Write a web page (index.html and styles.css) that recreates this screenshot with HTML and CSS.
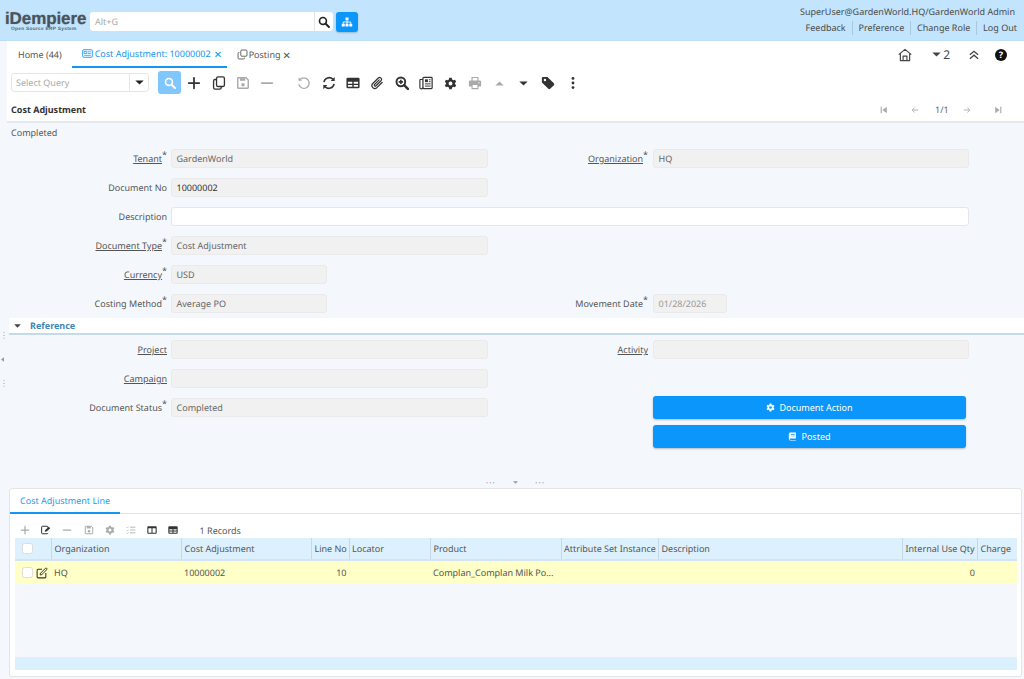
FILE: index.html
```html
<!DOCTYPE html>
<html lang="en">
<head>
<meta charset="utf-8">
<title>iDempiere</title>
<link rel="stylesheet" href="styles.css">
</head>
<body>
<svg class="sprite" xmlns="http://www.w3.org/2000/svg">
  <symbol id="search" viewBox="0 0 16 16"><circle cx="6.6" cy="6.6" r="4.6" fill="none" stroke="currentColor" stroke-width="2.2"/><path d="M10 10l4.6 4.6" stroke="currentColor" stroke-width="2.6" stroke-linecap="round"/></symbol>
  <symbol id="tree" viewBox="0 0 16 16"><path d="M6 2h4v3.6H6zM1 10.4h4V14H1zM6 10.4h4V14H6zM11 10.4h4V14h-4z" fill="currentColor"/><path d="M8 5.6v5M3 10.4V8h10v2.4" fill="none" stroke="currentColor" stroke-width="1.2"/></symbol>
  <symbol id="caret" viewBox="0 0 10 6"><path d="M0 .5h10L5 5.5z" fill="currentColor"/></symbol>
  <symbol id="caretup" viewBox="0 0 10 6"><path d="M0 5.5h10L5 .5z" fill="currentColor"/></symbol>
  <symbol id="news" viewBox="0 0 16 16"><rect x="1" y="2.5" width="14" height="11" rx="1.5" fill="none" stroke="currentColor" stroke-width="1.3"/><path d="M3.2 5h3.6v3H3.2zM8.2 5.5h4.6M8.2 8h4.6M3.2 10.7h9.6" fill="none" stroke="currentColor" stroke-width="1.1"/></symbol>
  <symbol id="windows" viewBox="0 0 16 16"><rect x="5.5" y="1.5" width="9" height="9" rx="1.5" fill="none" stroke="currentColor" stroke-width="1.3"/><path d="M3.5 5H3a1.500 1.500 0 0 0-1.500 1.500V13A1.500 1.500 0 0 0 3 14.500h6.500A1.500 1.500 0 0 0 11 13v-.5" fill="none" stroke="currentColor" stroke-width="1.300"/></symbol>
  <symbol id="plus" viewBox="0 0 16 16"><path d="M8 2v12M2 8h12" stroke="currentColor" stroke-width="2" stroke-linecap="round"/></symbol>
  <symbol id="minus" viewBox="0 0 16 16"><path d="M2 8h12" stroke="currentColor" stroke-width="2" stroke-linecap="round"/></symbol>
  <symbol id="copy" viewBox="0 0 16 16"><rect x="5.200" y="1" width="9" height="11" rx="1.800" fill="none" stroke="currentColor" stroke-width="1.500"/><path d="M5 4H3.500A1.700 1.700 0 0 0 1.800 5.700v7.600A1.700 1.700 0 0 0 3.500 15h5.300a1.700 1.700 0 0 0 1.700-1.700V12" fill="none" stroke="currentColor" stroke-width="1.500"/></symbol>
  <symbol id="save" viewBox="0 0 16 16"><path d="M2.500 2h9l2.500 2.500v9a.5.5 0 0 1-.5.5h-11a.5.5 0 0 1-.5-.5v-11a.5.5 0 0 1 .5-.5z" fill="none" stroke="currentColor" stroke-width="1.600"/><path d="M4.500 2.500h6v3h-6z" fill="currentColor"/><circle cx="8" cy="10" r="2" fill="currentColor"/></symbol>
  <symbol id="undo" viewBox="0 0 16 16"><path d="M3.300 4.300A6 6 0 1 1 2.200 10" fill="none" stroke="currentColor" stroke-width="1.500" stroke-linecap="round"/><path d="M1.800 1.500v4h4z" fill="currentColor"/></symbol>
  <symbol id="refresh" viewBox="0 0 16 16"><path d="M2.200 7A6 6 0 0 1 12.500 3.800M13.800 9A6 6 0 0 1 3.500 12.200" fill="none" stroke="currentColor" stroke-width="1.800"/><path d="M14.500 1v4.700H9.800zM1.500 15v-4.700h4.700z" fill="currentColor"/></symbol>
  <symbol id="table" viewBox="0 0 16 16"><path fill-rule="evenodd" d="M2 2h12a1.500 1.500 0 0 1 1.500 1.500v9A1.500 1.500 0 0 1 14 14H2A1.500 1.500 0 0 1 .5 12.500v-9A1.500 1.500 0 0 1 2 2zm.200 4.700v2.200h5V6.700zm6.600 0v2.200h5V6.700zm-6.600 3.600v2.100h5v-2.100zm6.600 0v2.100h5v-2.100z" fill="currentColor"/></symbol>
  <symbol id="columns" viewBox="0 0 16 16"><path fill-rule="evenodd" d="M2 2h12a1.500 1.500 0 0 1 1.500 1.500v9A1.500 1.500 0 0 1 14 14H2A1.500 1.500 0 0 1 .5 12.500v-9A1.500 1.500 0 0 1 2 2zm.200 3v7.400h5V5zm6.600 0v7.400h5V5z" fill="currentColor"/></symbol>
  <symbol id="clip" viewBox="0 0 16 16"><path d="M13.800 7.400l-5.900 5.900a3.300 3.300 0 0 1-4.700-4.700l6.300-6.300a2.200 2.200 0 0 1 3.100 3.100l-6 6a1.100 1.100 0 0 1-1.500-1.500l5.400-5.400" fill="none" stroke="currentColor" stroke-width="1.400" stroke-linecap="round"/></symbol>
  <symbol id="zoomin" viewBox="0 0 16 16"><circle cx="6.700" cy="6.700" r="5" fill="none" stroke="currentColor" stroke-width="2.200"/><path d="M10.500 10.500l4.200 4.200" stroke="currentColor" stroke-width="2.800" stroke-linecap="round"/><path d="M6.700 4.200v5M4.200 6.700h5" stroke="currentColor" stroke-width="1.800"/></symbol>
  <symbol id="paper" viewBox="0 0 16 16"><rect x="4.500" y="1.500" width="10.500" height="13" rx="1" fill="none" stroke="currentColor" stroke-width="1.400"/><path d="M4.500 4H1.500A.7.7 0 0 0 1 4.500v8.500a1.700 1.700 0 0 0 3.500 0" fill="none" stroke="currentColor" stroke-width="1.300"/><path d="M6.800 3.800h3.400v3.200H6.800z" fill="currentColor"/><path d="M11.300 4.300h2M11.300 6.500h2M6.800 9h6.500M6.800 11.500h6.500" stroke="currentColor" stroke-width="1.100"/></symbol>
  <symbol id="gear" viewBox="0 0 16 16"><path fill-rule="evenodd" d="M6.500 1h3l.5 2 1.500.9 2-.6 1.500 2.600-1.500 1.400v1.400l1.500 1.400-1.500 2.600-2-.6-1.500.9-.5 2h-3l-.5-2-1.500-.9-2 .6L1 10.100l1.500-1.400V7.300L1 5.900l1.500-2.600 2 .6L6 3zM8 5.600a2.400 2.400 0 1 0 0 4.800 2.400 2.400 0 0 0 0-4.800z" fill="currentColor"/></symbol>
  <symbol id="print" viewBox="0 0 16 16"><path fill-rule="evenodd" d="M4 1h8v4h1.500A1.500 1.500 0 0 1 15 6.500V11a1 1 0 0 1-1 1h-2v3H4v-3H2a1 1 0 0 1-1-1V6.500A1.500 1.500 0 0 1 2.500 5H4zm1.300 1.300V5h5.400V2.300zm0 8V13.700h5.400v-3.400zM12.500 7a.8.8 0 1 0 0 1.600.8.8 0 0 0 0-1.600z" fill="currentColor"/></symbol>
  <symbol id="tag" viewBox="0 0 16 16"><path fill-rule="evenodd" d="M1 2.200A1.200 1.200 0 0 1 2.200 1h5.100l7.400 7.400a1.500 1.500 0 0 1 0 2.100l-4.200 4.200a1.500 1.500 0 0 1-2.100 0L1 7.300zM4.500 3.100a1.400 1.400 0 1 0 0 2.800 1.400 1.400 0 0 0 0-2.800z" fill="currentColor"/></symbol>
  <symbol id="dots" viewBox="0 0 16 16"><circle cx="8" cy="2.800" r="1.600" fill="currentColor"/><circle cx="8" cy="8" r="1.600" fill="currentColor"/><circle cx="8" cy="13.200" r="1.600" fill="currentColor"/></symbol>
  <symbol id="home" viewBox="0 0 16 16"><path d="M.8 7.500L8 1.500l7.200 6M2.700 6.500V14.500h10.600V6.500M5.800 14.500V9.300h4.400v5.200" fill="none" stroke="currentColor" stroke-width="1.300" stroke-linejoin="round"/></symbol>
  <symbol id="chevup" viewBox="0 0 16 16"><path d="M2.500 7.800L8 3l5.500 4.800M2.500 13L8 8.200l5.500 4.800" fill="none" stroke="currentColor" stroke-width="1.700"/></symbol>
  <symbol id="first" viewBox="0 0 10 10"><path d="M1.500 1v8" stroke="currentColor" stroke-width="1.400"/><path d="M8.500 1v8L3 5z" fill="currentColor"/></symbol>
  <symbol id="last" viewBox="0 0 10 10"><path d="M8.500 1v8" stroke="currentColor" stroke-width="1.400"/><path d="M1.500 1v8L7 5z" fill="currentColor"/></symbol>
  <symbol id="left" viewBox="0 0 10 10"><path d="M9 5H1.500M4.500 2L1.500 5l3 3" fill="none" stroke="currentColor" stroke-width="1.100"/></symbol>
  <symbol id="right" viewBox="0 0 10 10"><path d="M1 5h7.500M5.500 2l3 3-3 3" fill="none" stroke="currentColor" stroke-width="1.100"/></symbol>
  <symbol id="book" viewBox="0 0 16 16"><path fill-rule="evenodd" d="M4 1h10v10.500H4.200a1.200 1.200 0 0 0 0 2.500H14v1H4a2.500 2.500 0 0 1-2.500-2.500v-9A2.500 2.500 0 0 1 4 1zm1.500 3v1.200h6.500V4zm0 2.500v1.200h6.500V6.500z" fill="currentColor"/></symbol>
  <symbol id="edit" viewBox="0 0 16 16"><path d="M8 3H2.800A1.300 1.300 0 0 0 1.500 4.300v9A1.300 1.300 0 0 0 2.800 14.500h9a1.300 1.300 0 0 0 1.300-1.300V8" fill="none" stroke="currentColor" stroke-width="1.400"/><path d="M6 8.300l6.700-6.700a1 1 0 0 1 1.400 0l.4.400a1 1 0 0 1 0 1.400L7.800 10.100l-2.300.5z" fill="none" stroke="currentColor" stroke-width="1.300"/></symbol>
  <symbol id="editrec" viewBox="0 0 16 16"><path d="M11 4.500V3.300A1.300 1.300 0 0 0 9.700 2H2.300A1.300 1.300 0 0 0 1 3.300v9.400A1.300 1.300 0 0 0 2.300 14h7.400a1.300 1.300 0 0 0 1.300-1.300" fill="none" stroke="currentColor" stroke-width="1.600"/><path d="M6 10.800l.7-2.800 5.700-5.300 2.400 2.400-5.800 5.200z" fill="currentColor"/></symbol>
  <symbol id="checklist" viewBox="0 0 16 16"><path d="M6.500 3.500H15M6.500 8H15M6.500 12.500H15" stroke="currentColor" stroke-width="1.300"/><path d="M1 3.500l1.200 1.200L4 2.500M1 8l1.200 1.200L4 7M1 12.500l1.200 1.200L4 11.500" fill="none" stroke="currentColor" stroke-width="1"/></symbol>
</svg>

<header class="top">
  <div class="brand">
    <div class="logo">
      <div class="logo-main">iDempiere</div>
      <div class="logo-sub">Open Source ERP System</div>
    </div>
    <div class="global-search">
      <span class="gs-input">Alt+G</span>
      <span class="gs-btn"><svg class="i14"><use href="#search"/></svg></span>
    </div>
    <span class="tree-btn"><svg class="i12"><use href="#tree"/></svg></span>
  </div>
  <div class="user">
    <div class="user-name">SuperUser@GardenWorld.HQ/GardenWorld Admin</div>
    <div class="user-links">
      <span class="ulink">Feedback</span><span class="ulink">Preference</span><span class="ulink">Change Role</span><span class="ulink">Log Out</span>
    </div>
  </div>
</header>

<div class="shell">
  <div class="rail">
    <span class="rail-dots">⋮</span>
    <svg class="rail-arrow" viewBox="0 0 4 6"><path d="M4 0v6L0 3z" fill="currentColor"/></svg>
    <span class="rail-dots">⋮</span>
  </div>
  <div class="content">
    <nav class="tabs">
      <div class="tab tab-home">Home (44)</div>
      <div class="tab tab-active"><svg class="i11"><use href="#news"/></svg>Cost Adjustment: 10000002<span class="x">✕</span></div>
      <div class="tab tab-post"><svg class="i11"><use href="#windows"/></svg>Posting<span class="x">✕</span></div>
      <div class="tab-tools">
        <svg class="tt-home"><use href="#home"/></svg>
        <span class="tt-count"><svg class="tt-caret"><use href="#caret"/></svg>2</span>
        <svg class="tt-chev"><use href="#chevup"/></svg>
        <span class="tt-help">?</span>
      </div>
    </nav>

    <div class="toolbar">
      <div class="query"><span class="query-text">Select Query</span><span class="query-btn"><svg class="c9"><use href="#caret"/></svg></span></div>
      <span class="qsearch"><svg class="i12"><use href="#search"/></svg></span>
      <div class="tools">
        <span class="tb"><svg><use href="#plus"/></svg></span>
        <span class="tb"><svg><use href="#copy"/></svg></span>
        <span class="tb off"><svg><use href="#save"/></svg></span>
        <span class="tb off"><svg><use href="#minus"/></svg></span>
        <span class="tb-gap"></span>
        <span class="tb off"><svg><use href="#undo"/></svg></span>
        <span class="tb"><svg><use href="#refresh"/></svg></span>
        <span class="tb"><svg><use href="#table"/></svg></span>
        <span class="tb"><svg><use href="#clip"/></svg></span>
        <span class="tb"><svg><use href="#zoomin"/></svg></span>
        <span class="tb"><svg><use href="#paper"/></svg></span>
        <span class="tb"><svg class="s14"><use href="#gear"/></svg></span>
        <span class="tb off"><svg><use href="#print"/></svg></span>
        <span class="tb off"><svg class="c9"><use href="#caretup"/></svg></span>
        <span class="tb"><svg class="c9"><use href="#caret"/></svg></span>
        <span class="tb"><svg><use href="#tag"/></svg></span>
        <span class="tb"><svg><use href="#dots"/></svg></span>
      </div>
    </div>

    <div class="titlebar">
      <span class="title">Cost Adjustment</span>
      <div class="pager">
        <svg class="pg pg1"><use href="#first"/></svg>
        <svg class="pg pg2"><use href="#left"/></svg>
        <span class="pg-text">1/1</span>
        <svg class="pg pg3"><use href="#right"/></svg>
        <svg class="pg pg4"><use href="#last"/></svg>
      </div>
    </div>

    <div class="status">Completed</div>

    <form class="form">
      <label class="lbl"><u>Tenant</u><sup>*</sup></label><div class="fld">GardenWorld</div>
      <label class="lbl lbl2"><u>Organization</u><sup>*</sup></label><div class="fld">HQ</div>

      <label class="lbl">Document No</label><div class="fld dark">10000002</div><div class="rest"></div>

      <label class="lbl">Description</label><div class="fld white span3"></div>

      <label class="lbl"><u>Document Type</u><sup>*</sup></label><div class="fld">Cost Adjustment</div><div class="rest"></div>

      <label class="lbl"><u>Currency</u><sup>*</sup></label><div class="fld short">USD</div><div class="rest"></div>

      <label class="lbl">Costing Method<sup>*</sup></label><div class="fld short">Average PO</div>
      <label class="lbl lbl2">Movement Date<sup>*</sup></label><div class="fld date">01/28/2026</div>
    </form>

    <div class="group"><svg class="c8"><use href="#caret"/></svg><span>Reference</span></div>

    <div class="form form-ref">
      <label class="lbl"><u>Project</u></label><div class="fld"></div>
      <label class="lbl lbl2"><u>Activity</u></label><div class="fld"></div>

      <label class="lbl"><u>Campaign</u></label><div class="fld"></div><div class="rest"></div>

      <label class="lbl">Document Status<sup>*</sup></label><div class="fld">Completed</div>
      <div class="lbl2"></div><button class="act" type="button"><svg class="i9"><use href="#gear"/></svg>Document Action</button>

      <div class="btn-skip"></div><button class="act" type="button"><svg class="i9"><use href="#book"/></svg>Posted</button>
    </div>

    <div class="splitter"><span>···</span><svg class="c5"><use href="#caret"/></svg><span>···</span></div>

    <section class="detail">
      <div class="d-tabs"><div class="d-tab">Cost Adjustment Line</div></div>
      <div class="d-tools">
        <span class="dt off"><svg><use href="#plus"/></svg></span>
        <span class="dt"><svg><use href="#editrec"/></svg></span>
        <span class="dt off"><svg><use href="#minus"/></svg></span>
        <span class="dt off"><svg><use href="#save"/></svg></span>
        <span class="dt off"><svg><use href="#gear"/></svg></span>
        <span class="dt off"><svg><use href="#checklist"/></svg></span>
        <span class="dt"><svg><use href="#columns"/></svg></span>
        <span class="dt"><svg><use href="#table"/></svg></span>
        <span class="records">1 Records</span>
      </div>
      <div class="grid">
        <div class="g-row g-head">
          <div class="gc gc-check"><span class="cb"></span></div>
          <div class="gc">Organization</div>
          <div class="gc">Cost Adjustment</div>
          <div class="gc">Line No</div>
          <div class="gc">Locator</div>
          <div class="gc">Product</div>
          <div class="gc">Attribute Set Instance</div>
          <div class="gc">Description</div>
          <div class="gc">Internal Use Qty</div>
          <div class="gc gc-last">Charge</div>
        </div>
        <div class="g-row g-data">
          <div class="gc gc-check"><span class="cb"></span><svg class="edit"><use href="#edit"/></svg></div>
          <div class="gc">HQ</div>
          <div class="gc">10000002</div>
          <div class="gc num">10</div>
          <div class="gc"></div>
          <div class="gc">Complan_Complan Milk Po...</div>
          <div class="gc"></div>
          <div class="gc"></div>
          <div class="gc num">0</div>
          <div class="gc"></div>
        </div>
        <div class="g-body"></div>
        <div class="g-foot"></div>
      </div>
    </section>
  </div>
</div>
</body>
</html>
```

FILE: styles.css
```css
* { box-sizing: border-box; }
html, body { margin: 0; padding: 0; height: 679px; overflow: hidden; }
body { font-family: "Noto Sans", sans-serif; font-size: 9px; color: #444; background: #f4f8fd; text-rendering: geometricPrecision; }
.sprite { display: none; }
svg { display: block; }

.top { height: 41px; background: #c2e4fc; border-bottom: 1px solid #bcdff7; display: flex; justify-content: space-between; padding: 0 9px 0 5px; }
.brand { display: flex; align-items: flex-start; }
.logo { width: 85px; padding-top: 10px; }
.logo-main { font-family: "Liberation Sans", sans-serif; font-weight: 700; font-size: 17px; line-height: 17px; color: #4a545e; letter-spacing: -.1px; text-shadow: 0 0 1px rgba(60,70,80,.5); }
.logo-sub { font-family: "Liberation Sans", sans-serif; font-weight: 700; font-size: 4.800px; line-height: 5px; color: #5a646e; padding-left: 6px; letter-spacing: .28px; white-space: nowrap; }
.global-search { margin: 12px 0 0 0; width: 243px; height: 19px; background: #fff; border-radius: 3px; display: flex; justify-content: space-between; }
.gs-input { color: #aaa; padding-left: 5px; line-height: 19px; }
.gs-btn { width: 19px; border-left: 1px solid #e4e4e4; color: #222; display: flex; align-items: center; justify-content: center; }
.i14 { width: 12px; height: 12px; }
.i12 { width: 12px; height: 12px; }
.tree-btn { margin: 12px 0 0 3px; width: 22px; height: 20px; border-radius: 3px; background: #0a96fa; color: #fff; display: flex; align-items: center; justify-content: center; box-shadow: 0 1px 2px rgba(0,0,0,.2); }
.user { text-align: right; color: #4a4a4a; padding-top: 4px; }
.user-name { line-height: 16px; }
.user-links { display: flex; justify-content: flex-end; line-height: 14px; margin: 1px -2px 0 0; }
.ulink { padding: 0 5.900px; border-left: 1px solid #a9c8de; }
.ulink:first-child { border-left: 0; }
.ulink:last-child { padding-right: 0; }

.shell { display: flex; height: 638px; }
.rail { width: 7px; flex: none; display: flex; flex-direction: column; align-items: flex-start; padding-top: 289px; color: #999; }
.rail-dots { font-size: 8px; line-height: 12px; width: 6px; text-align: center; }
.rail-arrow { width: 3px; height: 5px; margin: 14.500px 0 16.500px 1px; }
.content { flex: 1; min-width: 0; display: flex; flex-direction: column; }

.tabs { height: 27px; background: #fff; display: flex; align-items: stretch; }
.tab { display: flex; align-items: center; color: #555; white-space: nowrap; gap: 2px; }
.tab-home { padding: 0 10px 0 11px; }
.tab-active { color: #1296f0; border-bottom: 2px solid #1296f0; padding: 0 0 0 10px; width: 155px; }
.tab-post { padding-left: 10px; gap: 1px; }
.i11 { width: 11px; height: 11px; flex: none; }
.x { margin-left: 1px; font-size: 10px; }
.tab-tools { margin-left: auto; display: flex; align-items: center; color: #444; padding-right: 17px; }
.tt-home { width: 14px; height: 14px; margin-right: 20px; }
.tt-count { display: flex; align-items: center; font-size: 12px; gap: 2px; margin-right: 18px; }
.tt-caret { width: 9px; height: 5px; }
.tt-chev { width: 12px; height: 12px; margin-right: 15px; }
.tt-help { width: 12px; height: 12px; border-radius: 50%; background: #111; color: #fff; font-weight: 700; font-size: 9px; line-height: 12px; text-align: center; }

.toolbar { height: 30px; background: #fff; display: flex; align-items: center; padding: 0 0 0 4px; }
.query { width: 138px; height: 19px; border: 1px solid #e6e6e6; border-radius: 3px; display: flex; justify-content: space-between; margin-top: -1px; }
.query-text { color: #aaa; padding-left: 4px; line-height: 18px; }
.query-btn { width: 19px; border-left: 1px solid #e6e6e6; color: #222; display: flex; align-items: center; justify-content: center; }
.c9 { width: 9px; height: 5px; }
.qsearch { margin-left: 9px; width: 23px; height: 23px; background: #80c6ff; border-radius: 3px; color: #fff; display: flex; align-items: center; justify-content: center; margin-top: -1px; }
.tools { display: flex; margin-left: 1px; color: #333; }
.tb { width: 24.400px; height: 23px; display: flex; align-items: center; justify-content: center; }
.tb svg { width: 14px; height: 14px; }
.tb svg.c9 { width: 9px; height: 5px; }
.tb svg.s14 { width: 13px; height: 13px; }
.tb.off { color: #aaa; }
.tb-gap { width: 12.500px; }

.titlebar { height: 25px; background: #fff; border-bottom: 2px solid #e6e9ec; display: flex; align-items: center; justify-content: space-between; padding-left: 4px; }
.title { font-weight: 700; color: #333; }
.pager { display: flex; align-items: center; color: #aaa; }
.pg { width: 8px; height: 8px; }
.pg1 { margin-right: 23px; }
.pg2 { margin-right: 16px; }
.pg-text { color: #666; width: 13px; text-align: center; }
.pg3 { margin-left: 15px; margin-right: 23px; }
.pg4 { margin-right: 22px; }

.status { height: 19px; line-height: 19px; padding-left: 4px; color: #555; }

.form { display: grid; grid-template-columns: 164px 317px 165px 316px; grid-auto-rows: 29px; align-items: center; height: 176px; padding-top: 2px; }
.lbl { text-align: right; padding-right: 4px; color: #555; white-space: nowrap; }
.lbl sup { font-size: 9px; line-height: 0; }
.lbl2 { padding-right: 5px; }
.fld { height: 19px; line-height: 18px; background: #f1f1f1; border: 1px solid #eaeaea; border-radius: 3px; padding-left: 4.500px; color: #666; }
.fld.dark { color: #333; }
.fld.white { background: #fff; border-color: #e6e6e6; }
.span3 { grid-column: span 3; }
.rest { grid-column: span 2; }
.short { width: 156px; }
.date { width: 74px; color: #999; }

.group { height: 17px; margin-left: 2px; background: #fff; border-bottom: 2px solid #c4d9ea; display: flex; align-items: center; padding-left: 5px; gap: 9px; color: #3f86b8; font-weight: 700; }
.c8 { width: 7px; height: 4px; color: #444; }
.form-ref { height: 122px; padding-top: 0; }
.btn-skip { grid-column: 1 / span 3; }
.act { width: 313px; height: 23px; border: 0; border-radius: 3px; background: #0a96fa; color: #fff; font: inherit; display: flex; align-items: center; justify-content: center; gap: 4px; box-shadow: 0 1px 2px rgba(0,0,0,.25); padding: 0; }
.i9 { width: 9px; height: 9px; }

.splitter { height: 31px; display: flex; justify-content: center; align-items: center; gap: 17px; color: #999; padding-top: 20px; letter-spacing: 1px; }
.c5 { width: 5px; height: 3px; }

.detail { height: 189px; margin: 0 2px 2px 2px; background: #fff; border: 1px solid #e4e4e4; border-radius: 3px; display: flex; flex-direction: column; }
.d-tabs { height: 25px; border-bottom: 1px solid #e4e4e4; display: flex; flex: none; }
.d-tab { width: 110px; color: #1d9bf0; border-bottom: 2px solid #1296f0; padding-left: 10px; line-height: 23px; height: 25px; }
.d-tools { height: 24px; flex: none; display: flex; align-items: center; padding: 8px 0 0 4.400px; color: #333; }
.dt { width: 21.200px; display: flex; justify-content: center; }
.dt svg { width: 10px; height: 10px; }
.dt.off { color: #aaa; }
.records { margin-left: 15.700px; color: #555; }
.grid { flex: 1; display: flex; flex-direction: column; margin: 0 0 6px 5px; width: 1002px; }
.g-row { display: grid; grid-template-columns: 37px 130px 130px 37.500px 81.500px 130.500px 97.500px 244px 75px 39px; flex: none; }
.g-head { height: 23px; background: #ddf0fd; border-bottom: 2px solid #d4e3f1; }
.g-head .gc { border-right: 1px solid #c5d8e8; color: #555; padding-left: 2.500px; }
.g-head .gc-last { border-right: 0; }
.g-head .gc-check { padding-left: 6.700px; }
.g-data { height: 23px; background: #ffffc8; }
.g-data .gc { color: #555; padding-left: 2px; }
.gc { display: flex; align-items: center; white-space: nowrap; overflow: hidden; min-width: 0; }
.g-data .gc.num { justify-content: flex-end; padding-right: 3px; }
.g-data .gc-check { padding-left: 6.700px; gap: 3px; }
.cb { width: 11px; height: 11px; background: #fff; border: 1px solid #ddd; border-radius: 2.500px; flex: none; }
.edit { width: 12px; height: 12px; color: #333; flex: none; }
.g-body { flex: 1; background: #f4f8fd; }
.g-foot { height: 13px; background: #daf0fd; flex: none; }
```
